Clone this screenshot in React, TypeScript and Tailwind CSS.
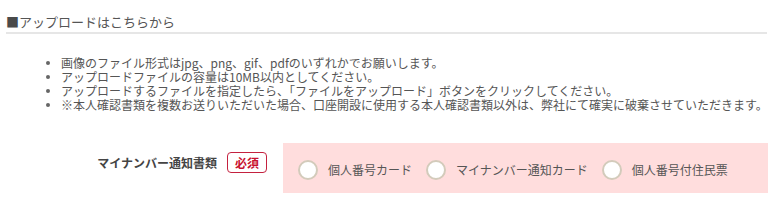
import React, { useState } from 'react';

const notes = [
  '画像のファイル形式はjpg、png、gif、pdfのいずれかでお願いします。',
  'アップロードファイルの容量は10MB以内としてください。',
  'アップロードするファイルを指定したら、「ファイルをアップロード」ボタンをクリックしてください。',
  '※本人確認書類を複数お送りいただいた場合、口座開設に使用する本人確認書類以外は、弊社にて確実に破棄させていただきます。',
];

const options = ['個人番号カード', 'マイナンバー通知カード', '個人番号付住民票'];

export default function App() {
  const [selected, setSelected] = useState<string | null>(null);

  return (
    <div
      className="w-[768px] h-[212px] bg-white overflow-hidden text-[#555]"
      style={{ fontFamily: '"Noto Sans CJK JP", "Noto Sans", sans-serif' }}
    >
      <div className="ml-[6px] mr-[1px] pt-[12px] border-b-2 border-[#e6e6e6]">
        <h2 className="text-[13px] leading-[20px] font-normal tracking-[0px]">
          <span className="text-[#4a4a4a]">■</span>アップロードはこちらから
        </h2>
      </div>

      <ul className="mt-[22px] pl-[61px]">
        {notes.map(note => (
          <li key={note} className="relative text-[12px] leading-[14px] whitespace-nowrap">
            <span className="absolute left-[-15px] top-[5px] w-[4px] h-[4px] rounded-full bg-[#666]" />
            {note}
          </li>
        ))}
      </ul>

      <div className="mt-[31px] flex">
        <div className="w-[283px] flex justify-end items-start pt-[9px] pr-[16px]">
          <span className="text-[12px] leading-[21px] font-bold text-[#444]">マイナンバー通知書類</span>
          <span className="ml-[10px] w-[40px] h-[21px] flex items-center justify-center border border-[#c4213f] rounded-[4px] text-[12px] font-bold text-[#c8102e]">
            必須
          </span>
        </div>
        <div className="flex-1 h-[50px] bg-[#ffdddd] flex items-center pl-[15px] pt-[4px]">
          {options.map(opt => (
            <label
              key={opt}
              onClick={() => setSelected(opt)}
              className="flex items-center mr-[14px] cursor-pointer"
            >
              <span className="w-[20px] h-[20px] rounded-full bg-white border-[2.5px] border-[#d3cbbb] flex items-center justify-center">
                {selected === opt && <span className="w-[8px] h-[8px] rounded-full bg-[#c8102e]" />}
              </span>
              <span className="ml-[10px] text-[12px] leading-[20px] text-[#555]">{opt}</span>
            </label>
          ))}
        </div>
      </div>
    </div>
  );
}
